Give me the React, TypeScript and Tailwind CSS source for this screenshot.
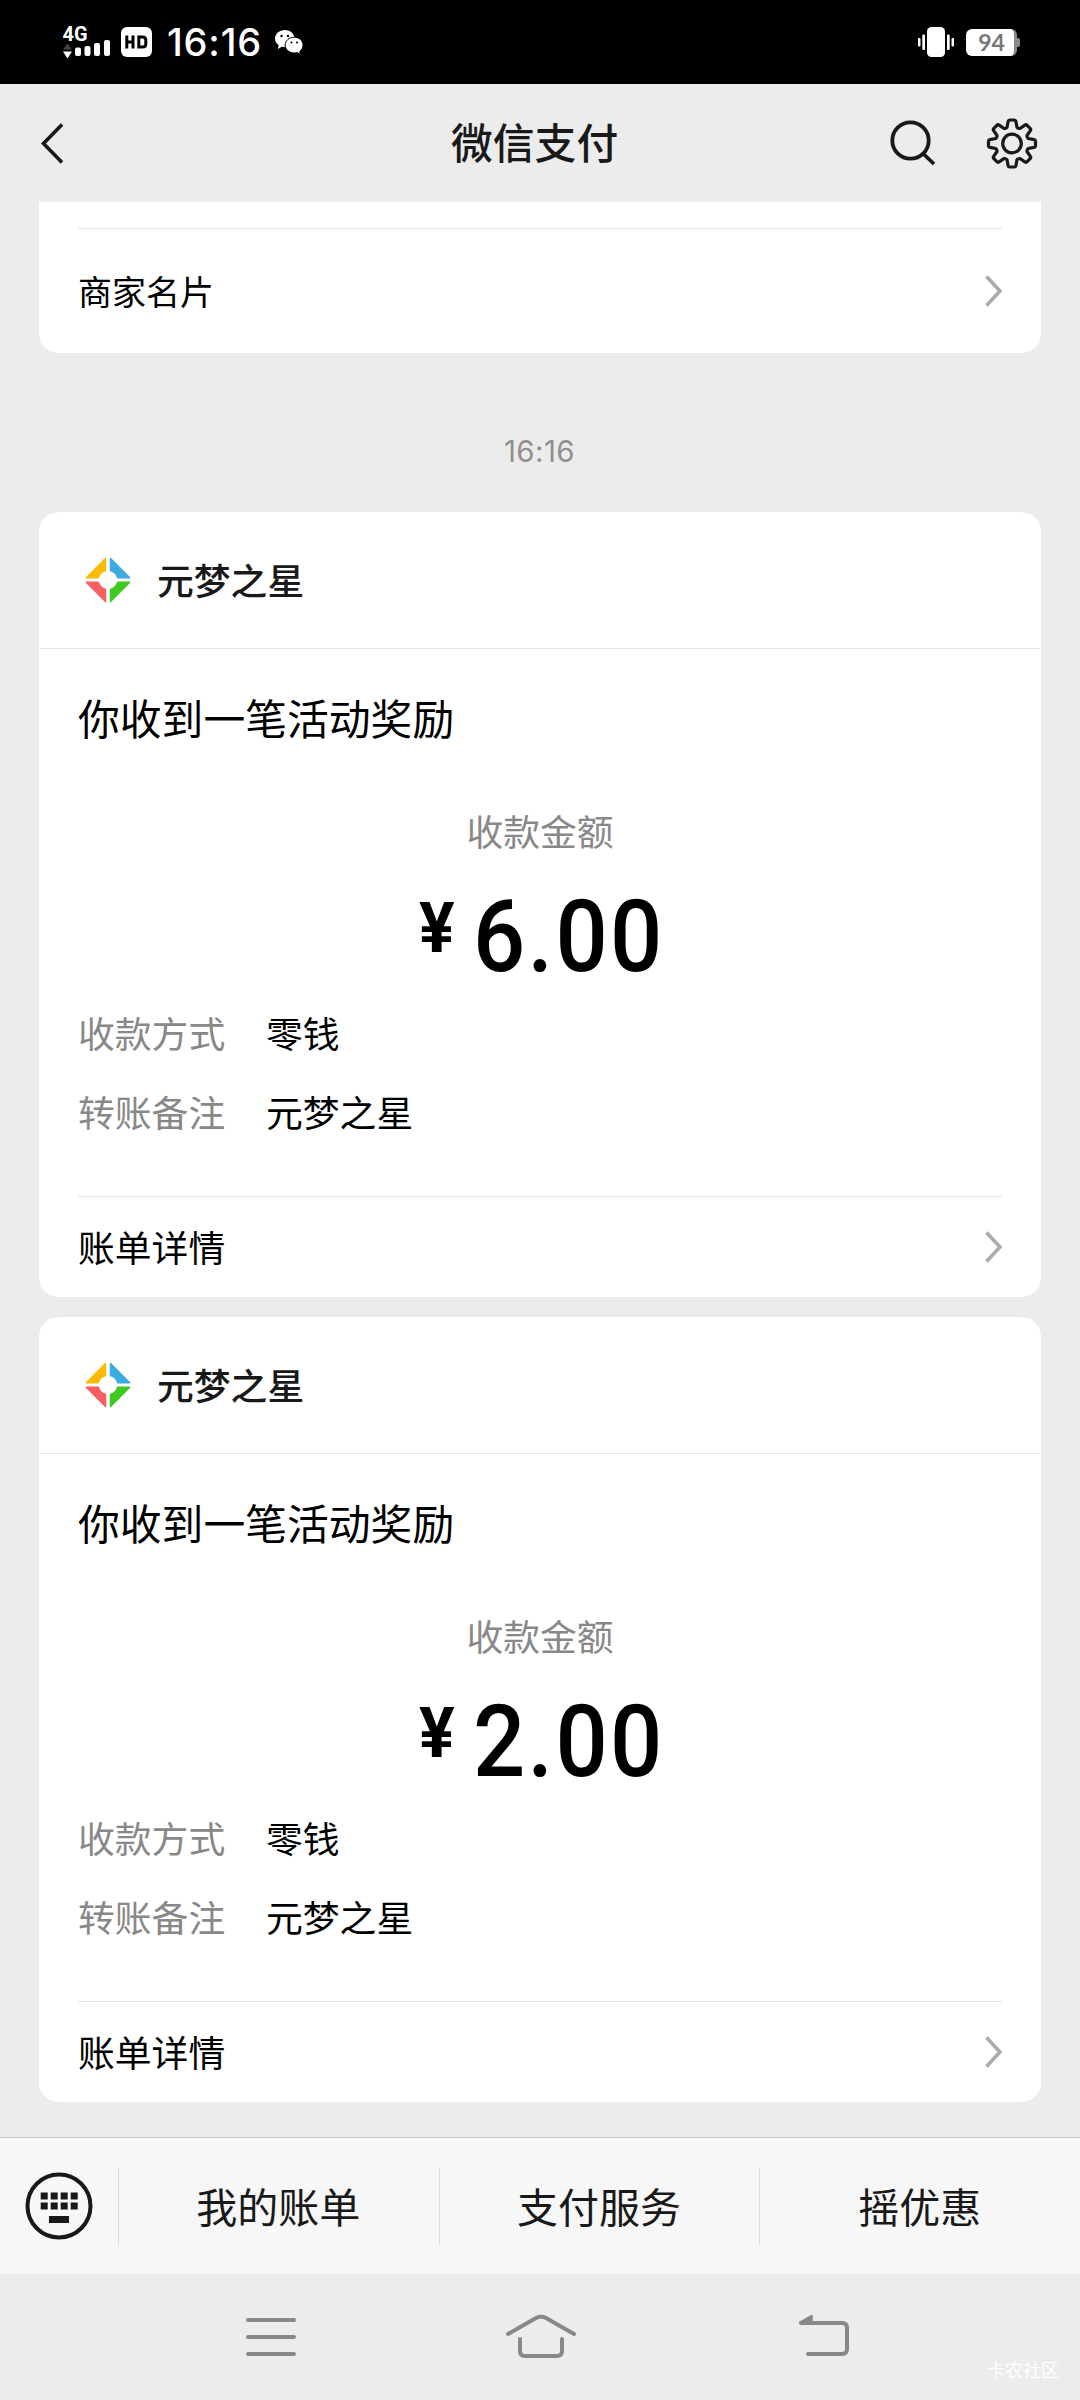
import React from "react";

const GEAR_TEETH = 8;

function gearPath(cx: number, cy: number) {
  const points: string[] = [];
  for (let i = 0; i < GEAR_TEETH; i++) {
    const base = (i * 2 * Math.PI) / GEAR_TEETH;
    const at = (r: number, deg: number) => {
      const a = base + (deg * Math.PI) / 180;
      return `${(cx + r * Math.sin(a)).toFixed(2)} ${(cy - r * Math.cos(a)).toFixed(2)}`;
    };
    points.push(`${i === 0 ? "M" : "L"}${at(17, -17)}`);
    points.push(`L${at(22.4, -10)}`);
    points.push(`Q${at(23.9, -8.5)} ${at(23.6, -5)}`);
    points.push(`L${at(23.6, 5)}`);
    points.push(`Q${at(23.9, 8.5)} ${at(22.4, 10)}`);
    points.push(`L${at(17, 17)}`);
    points.push(`Q${at(16, 22.5)} ${at(17, 28)}`);
  }
  return points.join(" ") + "Z";
}

function StatusBar() {
  return (
    <div className="flex h-[84px] items-center bg-black pr-[60px] pl-[62px] text-white">
      <svg width="50" height="38" viewBox="0 0 50 38">
        <text x="0.5" y="17.5" fontFamily="Roboto" fontWeight="700" fontSize="20.5" textLength="25" lengthAdjust="spacingAndGlyphs" fill="#fff">
          4G
        </text>
        <path d="M1 26.5L5.5 20.500L10 26.500Z" fill="#444" />
        <path d="M1 28.500H10L5.500 35.500Z" fill="#fff" />
        <rect x="13" y="24.500" width="6" height="8.500" rx="2" fill="#fff" />
        <rect x="22.500" y="23" width="6" height="10" rx="2" fill="#fff" />
        <rect x="32" y="20" width="6" height="13" rx="2" fill="#fff" />
        <rect x="42" y="17" width="6" height="16" rx="2" fill="#fff" />
      </svg>
      <svg width="31" height="30" viewBox="0 0 31 30" className="ml-[9px]">
        <rect width="31" height="30" rx="6" fill="#fff" />
        <path d="M5.800 8.500V21.500M5.800 15H12M12 8.500V21.500" stroke="#000" strokeWidth="3" fill="none" />
        <path d="M17.800 10H21.500Q24.800 10 24.800 13V17Q24.800 20 21.500 20H17.800Z" stroke="#000" strokeWidth="3" fill="none" />
      </svg>
      <span className="ml-[15px] w-[96px] font-['Inter'] text-[38px] leading-none font-medium tracking-[0.800px] whitespace-nowrap">16:16</span>
      <svg width="28" height="25" viewBox="0 0 28 25" className="ml-[12px]">
        <path d="M10 0C4.300 0 0 3.700 0 8.500c0 2.700 1.400 5 3.600 6.600L3 19l3.700-2.200c1.100.3 2.200.4 3.500.4C15.500 17 19.500 13.300 19.500 8.500 19.500 3.700 15.500 0 10 0Z" fill="#fff" />
        <path d="M19.200 7.200c-5 0-9 3.500-9 7.900s4 7.900 9 7.900c1.100 0 2.100-.1 3.100-.4L25.300 24.500l-.6-3c2-1.500 3.300-3.700 3.300-6.400 0-4.400-3.800-7.900-8.800-7.900Z" fill="#fff" stroke="#000" strokeWidth="1" />
        <g fill="#000">
          <circle cx="6.500" cy="6" r="1.200" />
          <circle cx="13" cy="6" r="1.200" />
          <circle cx="16.500" cy="12.500" r="1" />
          <circle cx="22" cy="12.500" r="1" />
        </g>
      </svg>
      <div className="ml-auto flex items-center gap-[12px]">
        <svg width="36" height="30" viewBox="0 0 36 30">
          <g fill="#fff">
            <rect x="0" y="11" width="2.500" height="8.500" rx="1" />
            <rect x="4.300" y="7.500" width="2.700" height="15.500" rx="1" />
            <rect x="9" y="0" width="18" height="30" rx="4.500" />
            <rect x="29" y="7.500" width="2.700" height="15.500" rx="1" />
            <rect x="33.500" y="11" width="2.500" height="8.500" rx="1" />
          </g>
        </svg>
        <div className="flex items-center">
          <div className="flex h-[27px] w-[51px] items-center justify-center rounded-[6px] border-r-[3px] border-[#8a8a8a] bg-white pt-px pl-[3px] font-['Lato'] text-[23px] leading-none font-bold text-[#777]">
            94
          </div>
          <div className="h-[9px] w-[3px] rounded-r-[2px] bg-[#8a8a8a]" />
        </div>
      </div>
    </div>
  );
}

function Header() {
  return (
    <header className="flex h-[118px] items-center pr-[42px] pl-[40px]">
      <svg width="24" height="42" viewBox="0 0 24 42" fill="none" stroke="#191919" strokeWidth="3.600">
        <path d="M22 2.500L3.500 21.500L22 40.500" strokeLinejoin="miter" />
      </svg>
      <h1 className="mt-[-3px] ml-[387px] text-[41.800px] leading-none font-medium text-[#191919]">微信支付</h1>
      <svg width="46" height="46" viewBox="0 0 46 46" fill="none" stroke="#191919" strokeWidth="3.800" className="ml-auto">
        <circle cx="20.500" cy="20.500" r="18.200" />
        <path d="M33 33.500L44 44" />
      </svg>
      <svg width="52" height="52" viewBox="0 0 52 52" fill="none" stroke="#191919" strokeWidth="3.200" strokeLinejoin="round" className="ml-[50px]">
        <path d={gearPath(26, 26.500)} />
        <circle cx="26" cy="26.500" r="9.300" />
      </svg>
    </header>
  );
}

function Chevron() {
  return (
    <svg width="18" height="34" viewBox="0 0 18 34" fill="none" stroke="#ababab" strokeWidth="3.600">
      <path d="M2.500 2.500L16 17L2.500 31.500" />
    </svg>
  );
}

function BrandLogo() {
  return (
    <svg width="46" height="46" viewBox="0 0 46 46" strokeWidth="1.500" strokeLinejoin="round">
      <path d="M20.500 1.500V13.600A10 10 0 0 0 13.300 20.800H1.300Z" fill="#fabb05" stroke="#fabb05" />
      <path d="M25.500 1.500V13.600A10 10 0 0 1 32.700 20.800H44.700Z" fill="#3cacdf" stroke="#3cacdf" />
      <path d="M20.500 44.500V32.600A10 10 0 0 1 13.300 25.300H1.300Z" fill="#f8605f" stroke="#f8605f" />
      <path d="M25.500 44.500V32.600A10 10 0 0 0 32.700 25.300H44.700Z" fill="#3fca22" stroke="#3fca22" />
    </svg>
  );
}

function Field({ label, value }: { label: string; value: string }) {
  return (
    <div className="flex h-[79px] items-center text-[36.800px] leading-none">
      <span className="w-[188px] text-[#888]">{label}</span>
      <span className="text-black">{value}</span>
    </div>
  );
}

function PaymentCard({ amount }: { amount: string }) {
  return (
    <section className="flex h-[785px] flex-col rounded-[20px] bg-white">
      <div className="flex h-[137px] items-center border-b border-[#e4e4e4] pl-[46px]">
        <BrandLogo />
        <span className="mt-[-2px] ml-[26px] text-[36.800px] leading-none font-medium text-[#191919]">元梦之星</span>
      </div>
      <div className="flex grow flex-col px-[39px]">
        <p className="mt-[47px] text-[41.800px] leading-[42px] text-black">你收到一笔活动奖励</p>
        <p className="mt-[74px] text-center text-[36.800px] leading-[37px] text-[#888]">收款金额</p>
        <div className="mt-[49px] flex h-[76px] items-start justify-center font-['Roboto'] text-black">
          <span className="w-[54px] text-[70px] leading-[60px] font-bold">
            <span className="inline-block origin-left scale-x-[0.95]">¥</span>
          </span>
          <span className="w-[188px] origin-left scale-x-[0.92] text-[100px] leading-[77px] font-medium tracking-[2.500px]">{amount}</span>
        </div>
        <div className="mt-[19px]">
          <Field label="收款方式" value="零钱" />
          <Field label="转账备注" value="元梦之星" />
        </div>
        <div className="mt-auto flex h-[101px] items-center justify-between border-t border-[#e4e4e4]">
          <span className="mt-[-2px] text-[36.800px] leading-none text-black">账单详情</span>
          <Chevron />
        </div>
      </div>
    </section>
  );
}

function KeyboardIcon() {
  return (
    <svg width="68" height="68" viewBox="0 0 68 68" fill="#191919">
      <circle cx="34" cy="34" r="31.500" fill="none" stroke="#191919" strokeWidth="4" />
      {[15.700, 25.700, 35.700, 45.700].map((x) => (
        <g key={x}>
          <rect x={x} y="20.500" width="7" height="7" />
          <rect x={x} y="30.500" width="7" height="7" />
        </g>
      ))}
      <rect x="24" y="44" width="20" height="7" />
    </svg>
  );
}

function MenuBar() {
  return (
    <footer className="flex h-[137px] items-center border-t border-[#c4c4c4] bg-[#f7f7f7] text-[41px] leading-none text-[#191919]">
      <div className="flex w-[118px] justify-center">
        <KeyboardIcon />
      </div>
      {["我的账单", "支付服务", "摇优惠"].map((label) => (
        <div key={label} className="flex h-[78px] flex-1 items-center justify-center border-l border-[#dcdcdc] pr-px pb-[2px]">
          {label}
        </div>
      ))}
    </footer>
  );
}

function SystemNav() {
  return (
    <nav className="relative flex h-[126px] items-start pt-[40px] pl-[245px]">
      <svg width="52" height="46" viewBox="0 0 52 46" stroke="#888" strokeWidth="4" strokeLinecap="round">
        <path d="M3 6H49M3 23H49M3 40H49" />
      </svg>
      <svg width="74" height="48" viewBox="0 0 74 48" fill="none" stroke="#888" strokeWidth="4" strokeLinecap="round" className="ml-[207px]">
        <path d="M4 20L32 4Q37 1.500 42 4L70 20" />
        <path d="M16 25V37Q16 42 21 42H53Q58 42 58 37V25" />
      </svg>
      <svg width="54" height="46" viewBox="0 0 54 46" fill="none" stroke="#888" strokeWidth="4" strokeLinecap="round" className="ml-[219px]">
        <path d="M4 9H45Q50 9 50 14V35Q50 40 45 40H11" />
        <path d="M2.500 8.500L15 1.500V9Z" fill="#888" strokeWidth="1.500" strokeLinejoin="round" />
      </svg>
      <span className="absolute top-[86px] right-[21px] text-[18px] leading-none text-white">卡农社区</span>
    </nav>
  );
}

export default function App() {
  return (
    <div className="flex h-[2400px] w-[1080px] flex-col overflow-hidden bg-[#ececec] font-['Noto_Sans_CJK_SC',sans-serif]">
      <StatusBar />
      <Header />
      <main className="flex grow flex-col px-[39px]">
        <section className="flex h-[151px] flex-col rounded-b-[20px] bg-white px-[39px] pt-[26px]">
          <div className="flex grow items-center justify-between border-t border-[#e4e4e4]">
            <span className="text-[34px] leading-none text-black">商家名片</span>
            <Chevron />
          </div>
        </section>
        <time className="mt-[80px] pr-px text-center font-['Inter'] text-[29.500px] leading-[36px] tracking-[0.400px] text-[#909090]">16:16</time>
        <div className="mt-[43px] flex flex-col gap-[20px]">
          <PaymentCard amount="6.00" />
          <PaymentCard amount="2.00" />
        </div>
      </main>
      <MenuBar />
      <SystemNav />
    </div>
  );
}
